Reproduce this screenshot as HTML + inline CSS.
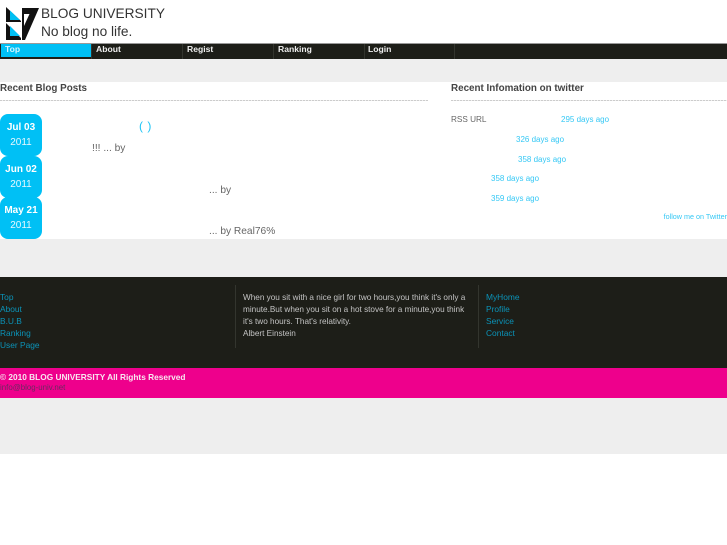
<!DOCTYPE html>
<html><head><meta charset="utf-8"><style>
html,body{margin:0;padding:0;background:#fff}
#p{position:relative;width:727px;height:545px;overflow:hidden;font-family:"Liberation Sans",sans-serif;background:#fff;filter:blur(.35px)}
#p div{position:absolute}
.t{white-space:nowrap}
.nav{top:44px;height:15px;line-height:11px;font-size:8.6px;font-weight:bold;color:#eee}
.navs{top:44px;width:1px;height:15px;background:#33352e}
.d{left:0;width:42px;height:42px;background:#00c0f5;border-radius:8px;color:#fff;text-align:center}
.d1{left:0;width:42px;top:7.5px;font-size:10px;font-weight:bold;line-height:12px}
.d2{left:0;width:42px;top:22.5px;font-size:10px;line-height:12px;color:#e8f8ff}
.g{font-size:10.2px;color:#666;line-height:12px}
.c{font-size:8px;color:#35c8f5;line-height:10px}
.f{font-size:8.4px;color:#0b93b8;line-height:12px}
.q{font-size:8.2px;color:#c4c4c4;line-height:12px}
.dash{height:1px;background:repeating-linear-gradient(90deg,#ccc 0 2px,#eee 2px 3px)}
.h{font-size:9.85px;font-weight:bold;color:#444;line-height:13px}
</style></head><body><div id="p">
<svg style="position:absolute;left:0;top:0" width="50" height="44" viewBox="0 0 50 44">
<polygon points="6,7 21,21 21,22 6,22" fill="#111"/>
<polygon points="10,10.5 20,20 10,20" fill="#00bff3"/>
<polygon points="6,23 21,38 21,40 6,40" fill="#111"/>
<polygon points="10,26 20,36 10,36" fill="#00bff3"/>
<polygon points="22,8 39,8 25,40 22,40" fill="#111"/>
<polygon points="24,14 29.5,14 24,26" fill="#fff"/>
</svg>
<div class="t" style="left:41px;top:6px;font-size:13.7px;line-height:16px;color:#333">BLOG UNIVERSITY</div>
<div class="t" style="left:41px;top:24px;font-size:13.7px;line-height:16px;color:#333">No blog no life.</div>

<div style="left:0;top:44px;width:727px;height:15px;background:#1d1e18"></div>
<div style="left:0;top:43px;width:727px;height:1px;background:#999"></div>
<div style="left:1px;top:44px;width:90px;height:13px;background:#00c0f5"></div>
<div class="nav t" style="left:5px;color:#d6f4ff">Top</div>
<div class="nav t" style="left:96px">About</div>
<div class="nav t" style="left:187px">Regist</div>
<div class="nav t" style="left:278px">Ranking</div>
<div class="nav t" style="left:368px">Login</div>
<div class="navs" style="left:91px"></div>
<div class="navs" style="left:182px"></div>
<div class="navs" style="left:273px"></div>
<div class="navs" style="left:364px"></div>
<div class="navs" style="left:454px"></div>

<div style="left:0;top:59px;width:727px;height:23px;background:#eee"></div>
<div class="h t" style="left:0;top:82px">Recent Blog Posts</div>
<div class="dash" style="left:0;top:100px;width:428px"></div>
<div class="h t" style="left:451px;top:82px">Recent Infomation on twitter</div>
<div class="dash" style="left:451px;top:100px;width:276px"></div>

<div class="d" style="top:114px"><div class="d1">Jul 03</div><div class="d2">2011</div></div>
<div class="d" style="top:156px"><div class="d1">Jun 02</div><div class="d2">2011</div></div>
<div class="d" style="top:197px"><div class="d1">May 21</div><div class="d2">2011</div></div>
<div class="t" style="left:139px;top:119px;font-size:12px;line-height:14px;color:#1cc4f5;word-spacing:1px">( )</div>
<div class="g t" style="left:92px;top:143px">!!! ... by</div>
<div class="g t" style="left:209px;top:185px">... by</div>
<div class="g t" style="left:209px;top:226px">... by Real76%</div>

<div class="g t" style="left:451px;top:114px;font-size:8.2px">RSS URL</div>
<div class="c t" style="left:561px;top:115px">295 days ago</div>
<div class="c t" style="left:516px;top:135px">326 days ago</div>
<div class="c t" style="left:518px;top:155px">358 days ago</div>
<div class="c t" style="left:491px;top:174px">358 days ago</div>
<div class="c t" style="left:491px;top:194px">359 days ago</div>
<div class="c t" style="right:0;top:212px;font-size:7.2px">follow me on Twitter</div>

<div style="left:0;top:239px;width:727px;height:38px;background:#eee"></div>
<div style="left:0;top:277px;width:727px;height:91px;background:#1d1e18"></div>
<div class="f t" style="left:0;top:291px">Top</div>
<div class="f t" style="left:0;top:303px">About</div>
<div class="f t" style="left:0;top:315px">B.U.B</div>
<div class="f t" style="left:0;top:327px">Ranking</div>
<div class="f t" style="left:0;top:339px">User Page</div>
<div style="left:235px;top:285px;width:1px;height:63px;background:#33352e"></div>
<div class="q t" style="left:243px;top:292px">When you sit with a nice girl for two hours,you think it's only a</div>
<div class="q t" style="left:243px;top:304px">minute.But when you sit on a hot stove for a minute,you think</div>
<div class="q t" style="left:243px;top:316px">it's two hours. That's relativity.</div>
<div class="q t" style="left:243px;top:328px">Albert Einstein</div>
<div style="left:478px;top:285px;width:1px;height:63px;background:#33352e"></div>
<div class="f t" style="left:486px;top:291px">MyHome</div>
<div class="f t" style="left:486px;top:303px">Profile</div>
<div class="f t" style="left:486px;top:315px">Service</div>
<div class="f t" style="left:486px;top:327px">Contact</div>

<div style="left:0;top:368px;width:727px;height:30px;background:#ee008c"></div>
<div class="t" style="left:0;top:372px;font-size:8.3px;font-weight:bold;line-height:11px;color:#f8e8f0">© 2010 BLOG UNIVERSITY All Rights Reserved</div>
<div class="t" style="left:0;top:383px;font-size:7.9px;line-height:10px;color:#6a2a60">info@blog-univ.net</div>
<div style="left:0;top:398px;width:727px;height:56px;background:#eee"></div>
</div></body></html>
